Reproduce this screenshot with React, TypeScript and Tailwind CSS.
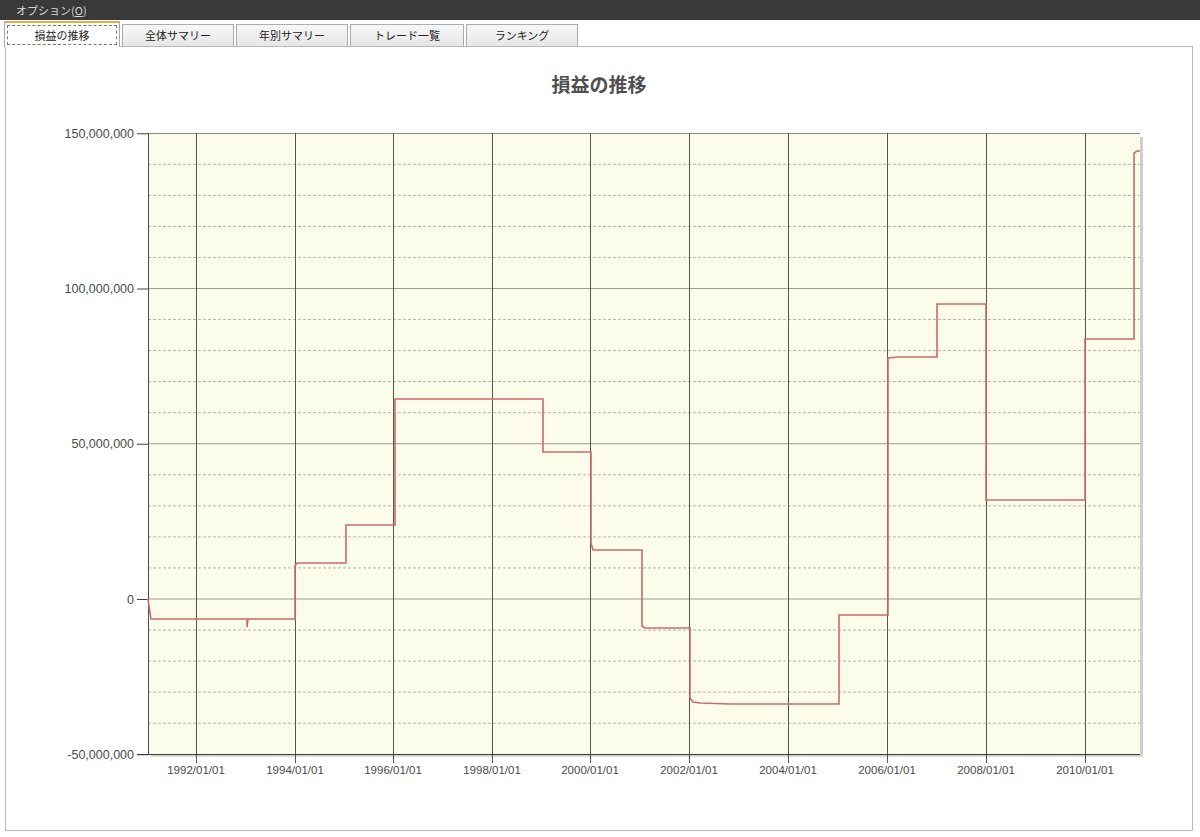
const tabs = ["損益の推移", "全体サマリー", "年別サマリー", "トレード一覧", "ランキング"];
const tabWidths = ["w-[116px]", "w-[112px]", "w-[112px]", "w-[114px]", "w-[112px]"];

// y pixel for a value in millions
const yOf = (m: number) => 599 - m * 3.105;

const minor = [-40, -30, -20, -10, 10, 20, 30, 40, 60, 70, 80, 90, 110, 120, 130, 140];
const major = [100, 50, 0];
const yLabels: [number, string][] = [
  [150, "150,000,000"],
  [100, "100,000,000"],
  [50, "50,000,000"],
  [0, "0"],
  [-50, "-50,000,000"],
];
const years: [number, string][] = [
  [196, "1992/01/01"],
  [295, "1994/01/01"],
  [393, "1996/01/01"],
  [492, "1998/01/01"],
  [590, "2000/01/01"],
  [689, "2002/01/01"],
  [788, "2004/01/01"],
  [887, "2006/01/01"],
  [986, "2008/01/01"],
  [1085, "2010/01/01"],
];

const profit =
  "M148,599 L149,606 L151,619 L247,619 L247,627 L248,619 L295,619 L295,566 L297,563 L346,563 L346,525 L395,525 L395,399 L543,399 L543,452 L591,452 L591,543 L593,550 L642,550 L642,626 L645,628 L690,628 L690,698 L693,702 L700,703 L730,704 L839,704 L839,615 L888,615 L888,358 L898,357 L937,357 L937,304 L986,304 L986,500 L1085,500 L1085,339 L1134,339 L1134,153 L1137,151 L1140,151";

const Chart = () => (
  <svg
    width={1186}
    height={734}
    viewBox="6 96 1186 734"
    className="block font-['Liberation_Sans',Arial,sans-serif]"
  >
    {/* plot shadow + background */}
    <rect x={1140} y={137} width={3} height={620} fill="#cfcfcf" />
    <rect x={151} y={754} width={992} height={3} fill="#d6d6d6" />
    <rect x={148} y={133} width={992} height={621} fill="#fcfcea" />

    {minor.map((m) => (
      <line
        key={m}
        x1={148}
        x2={1140}
        y1={yOf(m)}
        y2={yOf(m)}
        stroke="#b4b4aa"
        strokeDasharray="3 2"
      />
    ))}
    {major.map((m) => (
      <line key={m} x1={148} x2={1140} y1={yOf(m)} y2={yOf(m)} stroke="#9c9c90" />
    ))}
    <line x1={148} x2={1140} y1={133.5} y2={133.5} stroke="#8a8a8a" />

    {years.map(([x]) => (
      <line key={x} x1={x + 0.5} x2={x + 0.5} y1={133} y2={763} stroke="#555" />
    ))}

    <line x1={148.5} x2={148.5} y1={133} y2={755} stroke="#4a4a4a" />
    <line x1={137} x2={1140} y1={754.5} y2={754.5} stroke="#3a3a3a" />
    {yLabels.map(([m]) => (
      <line key={m} x1={137} x2={148} y1={yOf(m) + 0.5} y2={yOf(m) + 0.5} stroke="#444" />
    ))}

    <path d={profit} fill="none" stroke="#cc6a6a" strokeWidth={1.6} />

    {yLabels.map(([m, t]) => (
      <text key={m} x={134} y={yOf(m) + 4.5} textAnchor="end" fontSize={12.5} fill="#4a4a4a">
        {t}
      </text>
    ))}
    {years.map(([x, t]) => (
      <text key={x} x={x} y={774} textAnchor="middle" fontSize={11.5} fill="#4a4a4a">
        {t}
      </text>
    ))}
  </svg>
);

export default function App() {
  return (
    <div className="h-[837px] w-[1200px] overflow-hidden bg-white font-['Noto_Sans_CJK_JP',sans-serif]">
      <div className="flex h-[20px] items-center bg-[#3a3a3a] pl-[16px] text-[11px] leading-none text-[#d6d6d6]">
        オプション(<span className="underline">O</span>)
      </div>

      <div className="relative z-10 -mb-px flex h-[27px] items-end gap-[2px] pl-[4px]">
        {tabs.map((t, i) =>
          i === 0 ? (
            <div
              key={t}
              className={`${tabWidths[i]} flex h-[26px] items-stretch border-x border-t-2 border-x-[#a8a8a8] border-t-[#f0a93a] bg-white p-[2px]`}
            >
              <div className="flex flex-1 items-center justify-center border border-dashed border-[#777] text-[11px] text-[#222]">
                {t}
              </div>
            </div>
          ) : (
            <div
              key={t}
              className={`${tabWidths[i]} mb-px flex h-[22px] items-center justify-center border border-b-0 border-[#acacac] bg-gradient-to-b from-[#f7f7f7] to-[#e6e6e6] text-[11px] text-[#222]`}
            >
              {t}
            </div>
          ),
        )}
      </div>

      <div className="ml-[5px] h-[785px] w-[1188px] border border-[#b8b8b8] bg-white">
        <div className="pt-[25px] text-center text-[19px] font-bold leading-[24px] text-[#505050]">
          損益の推移
        </div>
        <Chart />
      </div>
    </div>
  );
}
